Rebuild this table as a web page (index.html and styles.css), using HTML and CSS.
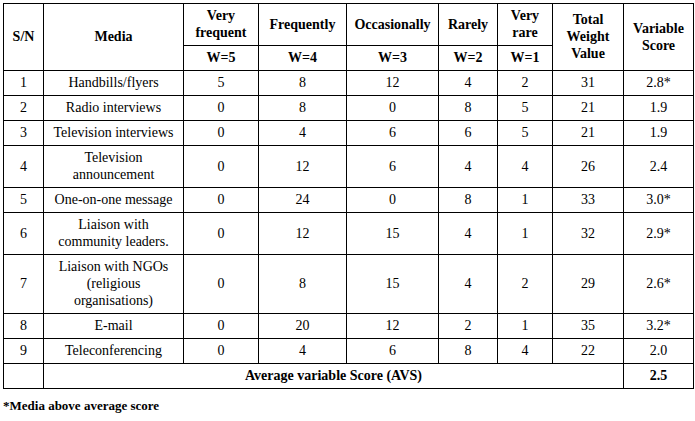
FILE: index.html
```html
<!DOCTYPE html>
<html>
<head>
<meta charset="utf-8">
<link rel="stylesheet" href="styles.css">
</head>
<body>
<div class="page">
<table class="tbl">
  <colgroup>
    <col class="c-sn"><col class="c-media"><col class="c-vf"><col class="c-fr"><col class="c-oc"><col class="c-ra"><col class="c-vr"><col class="c-tw"><col class="c-vs">
  </colgroup>
  <thead>
    <tr class="h1">
      <th rowspan="2">S/N</th>
      <th rowspan="2">Media</th>
      <th>Very frequent</th>
      <th>Frequently</th>
      <th>Occasionally</th>
      <th>Rarely</th>
      <th>Very rare</th>
      <th rowspan="2">Total Weight Value</th>
      <th rowspan="2">Variable Score</th>
    </tr>
    <tr class="h2">
      <th>W=5</th>
      <th>W=4</th>
      <th>W=3</th>
      <th>W=2</th>
      <th>W=1</th>
    </tr>
  </thead>
  <tbody>
    <tr><td>1</td><td>Handbills/flyers</td><td>5</td><td>8</td><td>12</td><td>4</td><td>2</td><td>31</td><td>2.8*</td></tr>
    <tr><td>2</td><td>Radio interviews</td><td>0</td><td>8</td><td>0</td><td>8</td><td>5</td><td>21</td><td>1.9</td></tr>
    <tr><td>3</td><td>Television interviews</td><td>0</td><td>4</td><td>6</td><td>6</td><td>5</td><td>21</td><td>1.9</td></tr>
    <tr><td>4</td><td>Television announcement</td><td>0</td><td>12</td><td>6</td><td>4</td><td>4</td><td>26</td><td>2.4</td></tr>
    <tr><td>5</td><td>One-on-one message</td><td>0</td><td>24</td><td>0</td><td>8</td><td>1</td><td>33</td><td>3.0*</td></tr>
    <tr><td>6</td><td>Liaison with community leaders.</td><td>0</td><td>12</td><td>15</td><td>4</td><td>1</td><td>32</td><td>2.9*</td></tr>
    <tr><td>7</td><td>Liaison with NGOs (religious organisations)</td><td>0</td><td>8</td><td>15</td><td>4</td><td>2</td><td>29</td><td>2.6*</td></tr>
    <tr><td>8</td><td>E-mail</td><td>0</td><td>20</td><td>12</td><td>2</td><td>1</td><td>35</td><td>3.2*</td></tr>
    <tr><td>9</td><td>Teleconferencing</td><td>0</td><td>4</td><td>6</td><td>8</td><td>4</td><td>22</td><td>2.0</td></tr>
    <tr class="avs"><td></td><td colspan="7" class="b">Average variable Score (AVS)</td><td class="b">2.5</td></tr>
  </tbody>
</table>
<p class="note">*Media above average score</p>
</div>
</body>
</html>
```

FILE: styles.css
```css
html, body {
  margin: 0;
  padding: 0;
  background: #fff;
}
.page {
  padding: 3px;
  font-family: "Liberation Serif", "Times New Roman", serif;
  color: #000;
}
.tbl {
  border-collapse: collapse;
  table-layout: fixed;
  width: 690px;
  font-size: 14px;
  line-height: 17px;
}
.c-sn { width: 40px; }
.c-media { width: 140px; }
.c-vf { width: 75px; }
.c-fr { width: 88px; }
.c-oc { width: 92px; }
.c-ra { width: 59px; }
.c-vr { width: 55px; }
.c-tw { width: 71px; }
.c-vs { width: 70px; }
.tbl th, .tbl td {
  border: 1px solid #000;
  padding: 3px 4px 4px;
  text-align: center;
  vertical-align: middle;
}
.tbl th {
  font-weight: bold;
}
.tbl td.b {
  font-weight: bold;
}
.note {
  margin: 9px 0 0;
  font-size: 13px;
  line-height: 16px;
  font-weight: bold;
}
```
